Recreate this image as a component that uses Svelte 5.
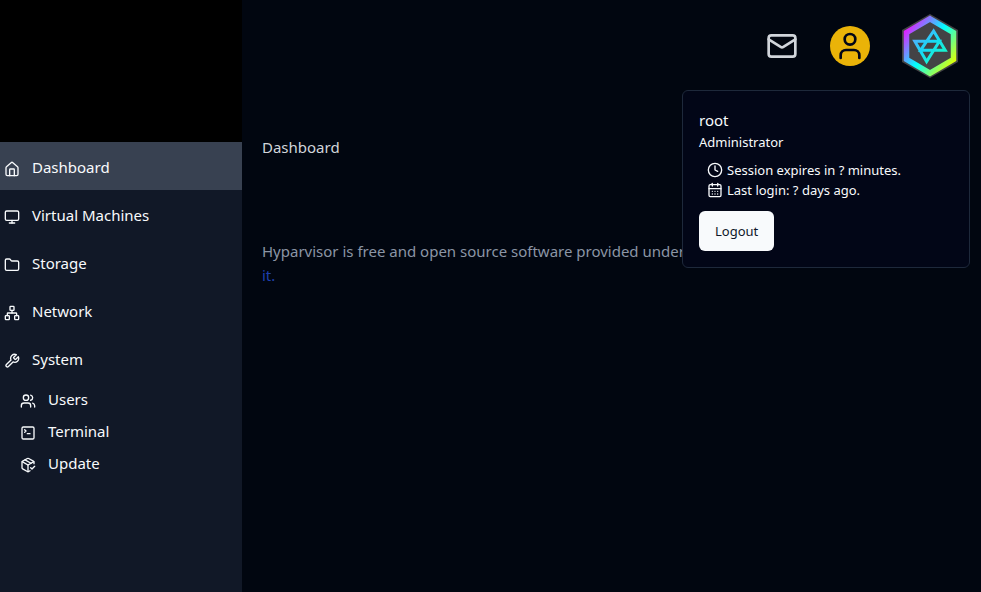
<script>
  const icons = {
    home: ['M3 10a2 2 0 0 1 .7-1.5l7-6a2 2 0 0 1 2.6 0l7 6A2 2 0 0 1 21 10v10a2 2 0 0 1-2 2H5a2 2 0 0 1-2-2z', 'M8.5 22v-9a1 1 0 0 1 1-1h5a1 1 0 0 1 1 1v9'],
    monitor: ['M4 3h16a2 2 0 0 1 2 2v10a2 2 0 0 1-2 2H4a2 2 0 0 1-2-2V5a2 2 0 0 1 2-2z', 'M8 21h8', 'M12 17v4'],
    folder: ['M20 20a2 2 0 0 0 2-2V8a2 2 0 0 0-2-2h-7.9a2 2 0 0 1-1.7-.9L9.6 3.9A2 2 0 0 0 7.9 3H4a2 2 0 0 0-2 2v13a2 2 0 0 0 2 2z'],
    network: ['M17 16h4a1 1 0 0 1 1 1v4a1 1 0 0 1-1 1h-4a1 1 0 0 1-1-1v-4a1 1 0 0 1 1-1z', 'M3 16h4a1 1 0 0 1 1 1v4a1 1 0 0 1-1 1H3a1 1 0 0 1-1-1v-4a1 1 0 0 1 1-1z', 'M10 2h4a1 1 0 0 1 1 1v4a1 1 0 0 1-1 1h-4a1 1 0 0 1-1-1V3a1 1 0 0 1 1-1z', 'M5 16v-3a1 1 0 0 1 1-1h12a1 1 0 0 1 1 1v3', 'M12 12V8'],
    wrench: ['M14.7 6.3a1 1 0 0 0 0 1.4l1.6 1.6a1 1 0 0 0 1.4 0l3.77-3.77a6 6 0 0 1-7.94 7.94l-6.91 6.91a2.12 2.12 0 0 1-3-3l6.91-6.91a6 6 0 0 1 7.94-7.94l-3.76 3.76z'],
    users: ['M16 21v-2a4 4 0 0 0-4-4H6a4 4 0 0 0-4 4v2', 'M13 7a4 4 0 1 1-8 0 4 4 0 0 1 8 0z', 'M22 21v-2a4 4 0 0 0-3-3.87', 'M16 3.13a4 4 0 0 1 0 7.75'],
    terminal: ['M5 3h14a2 2 0 0 1 2 2v14a2 2 0 0 1-2 2H5a2 2 0 0 1-2-2V5a2 2 0 0 1 2-2z', 'm7 11 2-2-2-2', 'M11 13h4'],
    update: ['m16 16 2 2 4-4', 'M21 10V8a2 2 0 0 0-1-1.73l-7-4a2 2 0 0 0-2 0l-7 4A2 2 0 0 0 3 8v8a2 2 0 0 0 1 1.73l7 4a2 2 0 0 0 2 0l2-1.14', 'm7.5 4.27 9 5.15', 'M3.29 7 12 12l8.71-5', 'M12 22V12'],
    mail: ['M4 4h16a2 2 0 0 1 2 2v12a2 2 0 0 1-2 2H4a2 2 0 0 1-2-2V6a2 2 0 0 1 2-2z', 'm22 7-8.97 5.7a1.94 1.94 0 0 1-2.06 0L2 7'],
    user: ['M16 7a4 4 0 1 1-8 0 4 4 0 0 1 8 0z', 'M19 21v-2a4 4 0 0 0-4-4H9a4 4 0 0 0-4 4v2'],
    clock: ['M22 12a10 10 0 1 1-20 0 10 10 0 0 1 20 0z', 'M12 6v6l4 2'],
    calendar: ['M5 4h14a2 2 0 0 1 2 2v14a2 2 0 0 1-2 2H5a2 2 0 0 1-2-2V6a2 2 0 0 1 2-2z', 'M16 2v4', 'M8 2v4', 'M3 10h18', 'M8 14h.01', 'M12 14h.01', 'M16 14h.01', 'M8 18h.01', 'M12 18h.01', 'M16 18h.01']
  };

  const links = [
    { label: 'Dashboard', icon: 'home', active: true },
    { label: 'Virtual Machines', icon: 'monitor' },
    { label: 'Storage', icon: 'folder' },
    { label: 'Network', icon: 'network' },
    { label: 'System', icon: 'wrench' }
  ];
  const subLinks = [
    { label: 'Users', icon: 'users' },
    { label: 'Terminal', icon: 'terminal' },
    { label: 'Update', icon: 'update' }
  ];
</script>

{#snippet icon(name)}
  <svg class="icon" viewBox="0 0 24 24" aria-hidden="true">
    {#each icons[name] as d}<path {d} />{/each}
  </svg>
{/snippet}

<div class="app">
  <aside>
    <div class="brand"></div>
    <nav>
      {#each links as link}
        <a href="#top" class="link" class:active={link.active}>
          {@render icon(link.icon)}<span>{link.label}</span>
        </a>
      {/each}
      <div class="sub">
        {#each subLinks as link}
          <a href="#top" class="link">
            {@render icon(link.icon)}<span>{link.label}</span>
          </a>
        {/each}
      </div>
    </nav>
  </aside>

  <div class="content">
    <header>
      <button class="mail" aria-label="Messages">{@render icon('mail')}</button>
      <div class="account">
        <button class="avatar" aria-label="Account">{@render icon('user')}</button>
        <section class="popover">
          <h2>root</h2>
          <p class="role">Administrator</p>
          <ul>
            <li>{@render icon('clock')}Session expires in ? minutes.</li>
            <li>{@render icon('calendar')}Last login: ? days ago.</li>
          </ul>
          <button class="logout">Logout</button>
        </section>
      </div>
      <a href="#top" class="logo" aria-label="Hyparvisor">
        <svg viewBox="0 0 56 64">
          <defs>
            <linearGradient id="rim" gradientUnits="userSpaceOnUse" x1="4" y1="14" x2="52" y2="50">
              <stop offset="0" stop-color="#e619ff" />
              <stop offset=".5" stop-color="#00ffff" />
              <stop offset="1" stop-color="#e5ff00" />
            </linearGradient>
            <linearGradient id="star" gradientUnits="userSpaceOnUse" x1="12" y1="16" x2="40" y2="48">
              <stop offset="0" stop-color="#6b9dff" />
              <stop offset=".5" stop-color="#16d9f5" />
              <stop offset="1" stop-color="#19ffc0" />
            </linearGradient>
          </defs>
          <path d="M28 0 56 16V48L28 64 0 48V16Z" fill="#434345" />
          <path d="M28 4.8 51.5 18.5V45.5L28 59.2 4.5 45.5V18.5Z" fill="none" stroke="url(#rim)" stroke-width="5.5" />
          <path d="M31.6 17 43.2 36.3H18.6ZM12.8 27.3H37.4L24.6 47.5Z" fill="none" stroke="url(#star)" stroke-width="3" />
        </svg>
      </a>
    </header>

    <main>
      <h1>Dashboard</h1>
      <p class="notice">
        Hyparvisor is free and open source software provided under the GNU GPL license. <a href="#top">Learn all about it.</a>
      </p>
    </main>
  </div>
</div>

<style>
  :global(body) {
    margin: 0;
    background: #010610;
  }
  .app {
    display: flex;
    min-height: 100vh;
    color: #f8fafc;
    font: 15px/24px "Segoe UI", "Noto Sans", sans-serif;
  }
  h1, h2, p, ul {
    margin: 0;
    padding: 0;
    font-size: inherit;
    font-weight: 400;
  }
  a {
    color: inherit;
    text-decoration: none;
  }
  button {
    border: 0;
    padding: 0;
    background: none;
    color: inherit;
    font: inherit;
    cursor: pointer;
  }
  .icon {
    display: block;
    flex: none;
    width: 16px;
    height: 16px;
    fill: none;
    stroke: currentColor;
    stroke-width: 2;
    stroke-linecap: round;
    stroke-linejoin: round;
  }
  aside {
    flex: none;
    width: 242px;
    background: #111827;
  }
  .brand {
    height: 142px;
    background: #000;
  }
  .link {
    display: flex;
    align-items: center;
    gap: 12px;
    height: 48px;
    padding: 0 4px;
  }
  .link span {
    padding-top: 2px;
  }
  .link .icon {
    margin-top: 6px;
  }
  .active {
    background: #384151;
  }
  .sub .link {
    height: 32px;
    padding-left: 20px;
  }
  .content {
    flex: 1;
    min-width: 0;
  }
  header {
    display: flex;
    justify-content: flex-end;
    align-items: center;
    gap: 32px;
    height: 92px;
    padding-right: 23px;
  }
  .mail {
    color: #d1d5db;
  }
  .mail .icon {
    width: 32px;
    height: 32px;
  }
  .account {
    position: relative;
  }
  .avatar {
    display: grid;
    place-items: center;
    width: 40px;
    height: 40px;
    border-radius: 50%;
    background: #eab308;
    color: #020617;
  }
  .avatar .icon {
    width: 32px;
    height: 32px;
  }
  .logo svg {
    display: block;
    width: 56px;
    height: 64px;
  }
  .popover {
    position: absolute;
    top: 64px;
    right: -100px;
    box-sizing: border-box;
    width: 288px;
    padding: 17px 16px 16px;
    border: 1px solid #1e293b;
    border-radius: 6px;
    background: #020617;
    font-size: 13px;
    line-height: 20px;
  }
  .popover h2 {
    font-size: 15px;
    line-height: 24px;
  }
  .popover ul {
    margin: 8px 8px 11px;
    list-style: none;
  }
  .popover li {
    display: flex;
    align-items: center;
    gap: 4px;
  }
  .logout {
    height: 40px;
    padding: 0 16px;
    border-radius: 6px;
    background: #f8fafc;
    color: #0f172a;
  }
  main {
    padding: 43px 20px;
  }
  h1 {
    color: #d1d5db;
  }
  .notice {
    margin-top: 80px;
    color: #8b95a5;
  }
  .notice a {
    color: #1e40af;
  }
</style>
